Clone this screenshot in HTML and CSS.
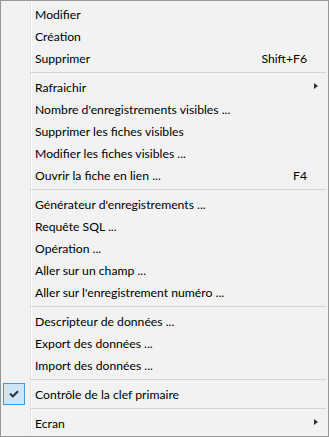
FILE: index.html
```html
<!DOCTYPE html>
<html lang="fr">
<head>
    <meta charset="UTF-8">
    <title>Menu contextuel</title>
    <link rel="stylesheet" href="styles.css">
</head>
<body>
    <div class="menu">
        <ul class="menu-list">
            <li class="item"><span class="label">Modifier</span></li>
            <li class="item"><span class="label">Création</span></li>
            <li class="item"><span class="label">Supprimer</span><span class="key">Shift+F6</span></li>
            <li class="sep"></li>
            <li class="item"><span class="label">Rafraichir</span><span class="arrow"></span></li>
            <li class="item"><span class="label">Nombre d'enregistrements visibles ...</span></li>
            <li class="item"><span class="label">Supprimer les fiches visibles</span></li>
            <li class="item"><span class="label">Modifier les fiches visibles ...</span></li>
            <li class="item"><span class="label">Ouvrir la fiche en lien ...</span><span class="key">F4</span></li>
            <li class="sep"></li>
            <li class="item"><span class="label">Générateur d'enregistrements ...</span></li>
            <li class="item"><span class="label">Requête SQL ...</span></li>
            <li class="item"><span class="label">Opération ...</span></li>
            <li class="item"><span class="label">Aller sur un champ ...</span></li>
            <li class="item"><span class="label">Aller sur l'enregistrement numéro ...</span></li>
            <li class="sep"></li>
            <li class="item"><span class="label">Descripteur de données ...</span></li>
            <li class="item"><span class="label">Export des données ...</span></li>
            <li class="item"><span class="label">Import des données ...</span></li>
            <li class="sep"></li>
            <li class="item checked">
                <span class="check">
                    <svg width="10" height="8" viewBox="0 0 10 8">
                        <path d="M1 3.6 L3.8 6.4 L9 1.2" fill="none" stroke="#2b2b2b" stroke-width="2"/>
                    </svg>
                </span>
                <span class="label">Contrôle de la clef primaire</span>
            </li>
            <li class="sep"></li>
            <li class="item"><span class="label">Ecran</span><span class="arrow"></span></li>
        </ul>
    </div>
</body>
</html>
```

FILE: styles.css
```css
body {
    margin: 0;
    font-family: "Segoe UI", "Lato", sans-serif;
    font-size: 12.2px;
    color: #000;
}
.menu {
    box-sizing: border-box;
    width: 329px;
    height: 437px;
    border: 1px solid #979797;
    padding: 2px 2px;
    /* gutter line next to the icon column */
    background: linear-gradient(to right, #e2e2e2 1px, #fff 1px) 27px 0 / 2px 100% no-repeat content-box, #f2f2f2;
}
.menu-list {
    list-style: none;
    margin: 0;
    padding: 0;
}
.item {
    position: relative;
    display: flex;
    align-items: center;
    height: 22px;
    padding-left: 32px;
    padding-right: 19px;
}
.label {
    flex: 1;
    white-space: nowrap;
}
.key {
    white-space: nowrap;
}
.arrow {
    position: absolute;
    right: 8px;
    top: 50%;
    margin-top: -4px;
    width: 0;
    height: 0;
    border-top: 3.5px solid transparent;
    border-bottom: 3.5px solid transparent;
    border-left: 4px solid #333;
}
.sep {
    height: 1px;
    margin: 3px 0 3px 28px;
    background: #d5d5d5;
}
.check {
    position: absolute;
    left: 0;
    top: 50%;
    margin-top: -11px;
    box-sizing: border-box;
    width: 22px;
    height: 22px;
    border: 1px solid #3a9ee0;
    background: #cde5f7;
    display: flex;
    align-items: center;
    justify-content: center;
}
```
